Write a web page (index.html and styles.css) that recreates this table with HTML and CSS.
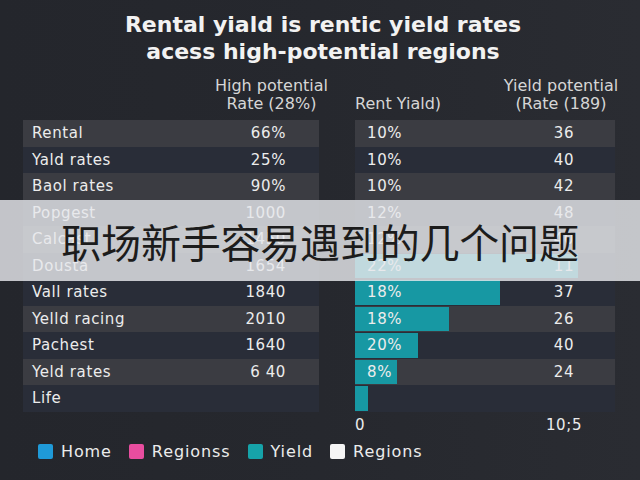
FILE: index.html
```html
<!DOCTYPE html>
<html lang="en">
<head>
<meta charset="utf-8">
<title>Rental yield</title>
<link rel="stylesheet" href="styles.css">
</head>
<body>
<div class="page">
  <h1 class="title">Rental yiald is rentic yield rates<br>acess high-potential regions</h1>
  <div class="heads">
    <div class="head head-a">High potential<br>Rate (28%)</div>
    <div class="head head-b">Rent Yiald)</div>
    <div class="head head-c">Yield potential<br>(Rate (189)</div>
  </div>
  <div class="tables">
    <div class="table">
      <div class="row light"><span>Rental</span><span>66%</span></div>
      <div class="row dark"><span>Yald rates</span><span>25%</span></div>
      <div class="row light"><span>Baol rates</span><span>90%</span></div>
      <div class="row dark"><span>Popgest</span><span>1000</span></div>
      <div class="row light"><span>Calcast</span><span>1450</span></div>
      <div class="row dark"><span>Dousta</span><span>1654</span></div>
      <div class="row dark"><span>Vall rates</span><span>1840</span></div>
      <div class="row light"><span>Yelld racing</span><span>2010</span></div>
      <div class="row dark"><span>Pachest</span><span>1640</span></div>
      <div class="row light"><span>Yeld rates</span><span>6 40</span></div>
      <div class="row dark"><span>Life</span><span></span></div>
    </div>
    <div class="table">
      <div class="rrow light"><span class="lbl">10%</span><span class="val">36</span></div>
      <div class="rrow dark"><span class="lbl">10%</span><span class="val">40</span></div>
      <div class="rrow light"><span class="lbl">10%</span><span class="val">42</span></div>
      <div class="rrow dark"><span class="lbl">12%</span><span class="val">48</span></div>
      <div class="rrow light"><span class="lbl">12%</span><span class="val">40</span></div>
      <div class="rrow dark"><div class="bar" style="width:223px"></div><span class="lbl">22%</span><span class="val">11</span></div>
      <div class="rrow dark"><div class="bar" style="width:145px"></div><span class="lbl">18%</span><span class="val">37</span></div>
      <div class="rrow light"><div class="bar" style="width:94px"></div><span class="lbl">18%</span><span class="val">26</span></div>
      <div class="rrow dark"><div class="bar" style="width:63px"></div><span class="lbl">20%</span><span class="val">40</span></div>
      <div class="rrow light"><div class="bar" style="width:42px"></div><span class="lbl">8%</span><span class="val">24</span></div>
      <div class="rrow dark"><div class="bar" style="width:13px"></div><span class="lbl"></span><span class="val"></span></div>
    </div>
  </div>
  <div class="axis">
    <span class="axis-0">0</span>
    <span class="axis-max">10;5</span>
  </div>
  <div class="legend">
    <span class="item"><i class="sw sw-blue"></i>Home</span>
    <span class="item"><i class="sw sw-pink"></i>Regionss</span>
    <span class="item"><i class="sw sw-teal"></i>Yield</span>
    <span class="item"><i class="sw sw-white"></i>Regions</span>
  </div>
  <div class="overlay"><span class="overlay-text">职场新手容易遇到的几个问题</span></div>
</div>
</body>
</html>
```
FILE: styles.css
```css
html, body {
  margin: 0;
  padding: 0;
}
body {
  background: #25272d;
  width: 640px;
  height: 480px;
  overflow: hidden;
  font-family: "DejaVu Sans", "Liberation Sans", sans-serif;
  color: #ececec;
}
.page {
  position: relative;
  width: 640px;
  height: 480px;
  padding-top: 11px;
  box-sizing: border-box;
  background: linear-gradient(90deg, #24262c 0%, #26282e 50%, #2a2c32 100%);
}
.title {
  margin: 0;
  font-size: 22px;
  line-height: 27px;
  font-weight: bold;
  text-align: center;
  color: #f2f2f2;
  padding-left: 6px;
}
.heads {
  display: grid;
  grid-template-columns: 117px 25px 144px 124px;
  padding-left: 213px;
  margin-top: 12px;
  font-size: 16px;
  line-height: 18px;
  color: #d6d6d6;
}
.head-a { grid-column: 1; text-align: center; white-space: nowrap; }
.head-b { grid-column: 3; align-self: end; white-space: nowrap; }
.head-c { grid-column: 4; text-align: center; white-space: nowrap; }
.tables {
  display: grid;
  grid-template-columns: 296px 260px;
  column-gap: 36px;
  padding-left: 23px;
  margin-top: 7px;
  font-size: 15px;
  letter-spacing: 0.6px;
}
.row, .rrow {
  height: 26.5px;
  display: flex;
  align-items: center;
}
.row {
  justify-content: space-between;
  padding: 0 33px 0 9px;
}
.light { background: #3b3c42; }
.dark { background: #292d38; }
.rrow {
  position: relative;
  display: grid;
  grid-template-columns: 1fr 60px;
  padding: 0 21px 0 12px;
}
.lbl, .val {
  position: relative;
}
.val { text-align: center; }
.bar {
  position: absolute;
  left: 0;
  top: 1px;
  bottom: 1px;
  background: #1798a3;
}
.axis {
  display: grid;
  grid-template-columns: 179px 60px;
  padding-left: 355px;
  margin-top: 4px;
  font-size: 15px;
  line-height: 18px;
  letter-spacing: 0.6px;
}
.axis-max { text-align: center; }
.legend {
  display: flex;
  align-items: center;
  padding-left: 38px;
  margin-top: 8px;
  font-size: 16px;
  letter-spacing: 0.9px;
  color: #ececec;
}
.item {
  display: flex;
  align-items: center;
  margin-right: 17px;
}
.sw {
  width: 15px;
  height: 15px;
  border-radius: 2px;
  margin-right: 8px;
}
.sw-blue { background: #1f9ad8; }
.sw-pink { background: #e84d9f; }
.sw-teal { background: #16a3a9; }
.sw-white { background: #f5f5f5; }
.overlay {
  position: absolute;
  left: 0;
  top: 200px;
  width: 640px;
  height: 81px;
  background: rgba(231, 232, 235, 0.82);
  display: flex;
  align-items: center;
  justify-content: center;
}
.overlay-text {
  font-family: "Noto Sans CJK SC", sans-serif;
  font-size: 40px;
  color: #1c1c1c;
  letter-spacing: -0.2px;
}
```
